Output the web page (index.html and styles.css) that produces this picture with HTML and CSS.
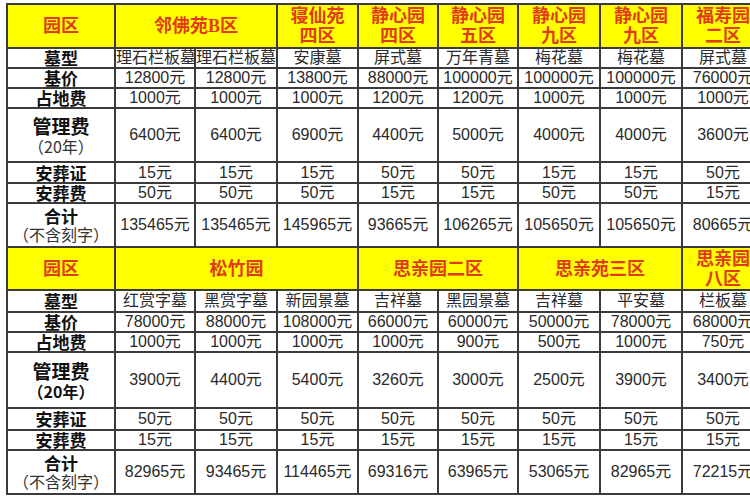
FILE: index.html
```html
<!DOCTYPE html>
<html lang="zh">
<head>
<meta charset="utf-8">
<title>墓园价格表</title>
<link rel="stylesheet" href="styles.css">
</head>
<body>
<table class="price">
  <colgroup>
    <col class="c-label">
    <col class="c80"><col class="c82"><col class="c81"><col class="c80">
    <col class="c80"><col class="c82"><col class="c82"><col class="c82">
  </colgroup>
  <tbody>
    <tr class="r44 head">
      <td>园区</td>
      <td colspan="2">邻佛苑B区</td>
      <td>寝仙苑<br>四区</td>
      <td>静心园<br>四区</td>
      <td>静心园<br>五区</td>
      <td>静心园<br>九区</td>
      <td>静心园<br>九区</td>
      <td>福寿园<br>二区</td>
    </tr>
    <tr class="r20">
      <th>墓型</th>
      <td>理石栏板墓</td><td>理石栏板墓</td><td>安康墓</td><td>屏式墓</td><td>万年青墓</td><td>梅花墓</td><td>梅花墓</td><td>屏式墓</td>
    </tr>
    <tr class="r20">
      <th>基价</th>
      <td>12800元</td><td>12800元</td><td>13800元</td><td>88000元</td><td>100000元</td><td>100000元</td><td>100000元</td><td>76000元</td>
    </tr>
    <tr class="r20">
      <th>占地费</th>
      <td>1000元</td><td>1000元</td><td>1000元</td><td>1200元</td><td>1200元</td><td>1000元</td><td>1000元</td><td>1000元</td>
    </tr>
    <tr class="r54">
      <th><span class="big">管理费</span><br><span class="sub">（20年）</span></th>
      <td>6400元</td><td>6400元</td><td>6900元</td><td>4400元</td><td>5000元</td><td>4000元</td><td>4000元</td><td>3600元</td>
    </tr>
    <tr class="r21">
      <th>安葬证</th>
      <td>15元</td><td>15元</td><td>15元</td><td>50元</td><td>50元</td><td>15元</td><td>15元</td><td>50元</td>
    </tr>
    <tr class="r20">
      <th>安葬费</th>
      <td>50元</td><td>50元</td><td>50元</td><td>15元</td><td>15元</td><td>50元</td><td>50元</td><td>15元</td>
    </tr>
    <tr class="r44">
      <th>合计<br><span class="sub">（不含刻字）</span></th>
      <td>135465元</td><td>135465元</td><td>145965元</td><td>93665元</td><td>106265元</td><td>105650元</td><td>105650元</td><td>80665元</td>
    </tr>

    <tr class="r43 head">
      <td>园区</td>
      <td colspan="3">松竹园</td>
      <td colspan="2">思亲园二区</td>
      <td colspan="2">思亲苑三区</td>
      <td>思亲园<br>八区</td>
    </tr>
    <tr class="r22">
      <th>墓型</th>
      <td>红赏字墓</td><td>黑赏字墓</td><td>新园景墓</td><td>吉祥墓</td><td>黑园景墓</td><td>吉祥墓</td><td>平安墓</td><td>栏板墓</td>
    </tr>
    <tr class="r20">
      <th>基价</th>
      <td>78000元</td><td>88000元</td><td>108000元</td><td>66000元</td><td>60000元</td><td>50000元</td><td>78000元</td><td>68000元</td>
    </tr>
    <tr class="r20">
      <th>占地费</th>
      <td>1000元</td><td>1000元</td><td>1000元</td><td>1000元</td><td>900元</td><td>500元</td><td>1000元</td><td>750元</td>
    </tr>
    <tr class="r56">
      <th><span class="big">管理费</span><br><span class="sub bold">（20年）</span></th>
      <td>3900元</td><td>4400元</td><td>5400元</td><td>3260元</td><td>3000元</td><td>2500元</td><td>3900元</td><td>3400元</td>
    </tr>
    <tr class="r22">
      <th>安葬证</th>
      <td>50元</td><td>50元</td><td>50元</td><td>50元</td><td>50元</td><td>50元</td><td>50元</td><td>50元</td>
    </tr>
    <tr class="r20">
      <th>安葬费</th>
      <td>15元</td><td>15元</td><td>15元</td><td>15元</td><td>15元</td><td>15元</td><td>15元</td><td>15元</td>
    </tr>
    <tr class="r44">
      <th>合计<br><span class="sub">（不含刻字）</span></th>
      <td>82965元</td><td>93465元</td><td>114465元</td><td>69316元</td><td>63965元</td><td>53065元</td><td>82965元</td><td>72215元</td>
    </tr>
  </tbody>
</table>
</body>
</html>
```

FILE: styles.css
```css
html, body {
  margin: 0;
  padding: 0;
  background: #ffffff;
  overflow: hidden;
}

body {
  width: 750px;
  height: 500px;
}

.price {
  border-collapse: collapse;
  table-layout: fixed;
  width: 757px;
  margin: 3px 0 0 6px;
  font-family: "Liberation Sans", "Noto Sans CJK SC", sans-serif;
  font-size: 16px;
  color: #2a2a2a;
}

.c-label { width: 108px; }
.c80 { width: 80px; }
.c81 { width: 81px; }
.c82 { width: 82px; }

.price td,
.price th {
  border: 2px solid #3b3b3b;
  padding: 0;
  text-align: center;
  vertical-align: middle;
  white-space: nowrap;
  line-height: 18px;
}

.price th {
  font-family: "Noto Sans CJK SC", sans-serif;
  font-weight: 700;
  font-size: 17px;
  color: #111111;
  line-height: 18px;
}

.price th .big {
  font-size: 19px;
  line-height: 23px;
}

.price th .sub {
  font-weight: 400;
  font-size: 16px;
  line-height: 19px;
  color: #333333;
}

.price th .sub.bold {
  font-weight: 700;
  color: #111111;
}

.head td {
  background: #ffff00;
  color: #e03c1a;
  font-family: "Liberation Serif", "Noto Sans CJK SC", serif;
  font-weight: 700;
  font-size: 18px;
  line-height: 20px;
}

.r20 { height: 20px; }
.r21 { height: 21px; }
.r22 { height: 22px; }
.r43 { height: 43px; }
.r44 { height: 44px; }
.r54 { height: 54px; }
.r56 { height: 56px; }
```
